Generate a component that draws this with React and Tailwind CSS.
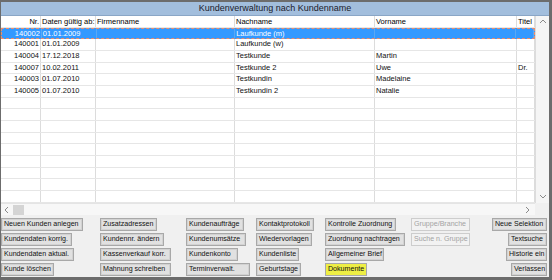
import React from "react";

const cols = [
  { label: "Nr.", w: "w-[40px]", right: true },
  { label: "Daten gültig ab:", w: "w-[55px]" },
  { label: "Firmenname", w: "w-[139px]" },
  { label: "Nachname", w: "w-[140px]" },
  { label: "Vorname", w: "w-[142px]" },
  { label: "Titel", w: "w-[18px]" },
];

const rows = [
  ["140002", "01.01.2009", "", "Laufkunde (m)", "", ""],
  ["140001", "01.01.2009", "", "Laufkunde (w)", "", ""],
  ["140004", "17.12.2018", "", "Testkunde", "Martin", ""],
  ["140007", "10.02.2011", "", "Testkunde 2", "Uwe", "Dr."],
  ["140003", "01.07.2010", "", "Testkundin", "Madelaine", ""],
  ["140005", "01.07.2010", "", "Testkundin 2", "Natalie", ""],
];

// 15 rows fill the grid, empty ones still draw lines
const allRows = [...rows, ...Array.from({ length: 9 }, () => ["", "", "", "", "", ""])];

const buttonCols = [
  {
    w: "w-[99px]",
    items: [
      ["Neuen Kunden anlegen", "w-[82px]"],
      ["Kundendaten korrig.", "w-[71px]"],
      ["Kundendaten aktual.", "w-[73px]"],
      ["Kunde löschen", "w-[53px]"],
    ],
  },
  {
    w: "w-[86px]",
    items: [
      ["Zusatzadressen", "w-[57px]"],
      ["Kundennr. ändern", "w-[64px]"],
      ["Kassenverkauf korr.", "w-[71px]"],
      ["Mahnung schreiben", "w-[71px]"],
    ],
  },
  {
    w: "w-[70px]",
    items: [
      ["Kundenaufträge", "w-[58px]"],
      ["Kundenumsätze", "w-[60px]"],
      ["Kundenkonto", "w-[52px]"],
      ["Terminverwalt.", "w-[64px]"],
    ],
  },
  {
    w: "w-[69px]",
    items: [
      ["Kontaktprotokoll", "w-[58px]"],
      ["Wiedervorlagen", "w-[56px]"],
      ["Kundenliste", "w-[43px]"],
      ["Geburtstage", "w-[45px]"],
    ],
  },
  {
    w: "w-[86px]",
    items: [
      ["Kontrolle Zuordnung", "w-[71px]"],
      ["Zuordnung nachtragen", "w-[80px]"],
      ["Allgemeiner Brief", "w-[59px]"],
      ["Dokumente", "w-[42px]", "yellow"],
    ],
  },
  {
    w: "w-[70px]",
    items: [
      ["Gruppe/Branche", "w-[59px]", "disabled"],
      ["Suche n. Gruppe", "w-[59px]", "disabled"],
    ],
  },
];

const rightButtons = [
  ["Neue Selektion", "w-[55px]"],
  ["Textsuche", "w-[39px]"],
  ["Historie ein", "w-[41px]"],
  ["Verlassen", "w-[36px]"],
];

const Btn = ({ label, w, kind }) => {
  let cls = "border-[#a8a8a8] bg-[#e1e1e1] text-[#111] shadow-[inset_0_0_0_1px_#d2d2d2]";
  if (kind === "disabled") cls = "border-[#cdcdcd] bg-[#f2f2f2] text-[#a3a3a3]";
  if (kind === "yellow") cls = "border-[#a8a8a8] bg-[#eeee44] text-[#111]";
  return (
    <div
      className={`${w} ${cls} h-[13px] border pl-[2px] text-[7.1px] leading-[11px] whitespace-nowrap overflow-hidden`}
    >
      {label}
    </div>
  );
};

const Chevron = ({ dir }) => {
  const d = {
    up: "M1 5 L4 2 L7 5",
    down: "M1 2 L4 5 L7 2",
    left: "M5 1 L2 4 L5 7",
    right: "M2 1 L5 4 L2 7",
  }[dir];
  return (
    <svg width="8" height="8" viewBox="0 0 8 8">
      <path d={d} fill="none" stroke="#8a8a8a" strokeWidth="1" />
    </svg>
  );
};

export default function App() {
  return (
    <div
      className="w-[552px] h-[280px] bg-[#f0f0f0] border-t-2 border-l border-r-[3px] border-b-[3px] border-[#6c6c6c] flex flex-col overflow-hidden"
      style={{ fontFamily: '"Liberation Sans", Arial, sans-serif' }}
    >
      <div className="h-[14px] bg-[#a2bedd] border-b border-[#8aa6c6] flex items-center justify-center text-[9px] text-[#1b1b2b]">
        Kundenverwaltung nach Kundenname
      </div>

      <div className="flex h-[187px]">
        <div className="w-[534px] bg-white flex flex-col">
          <div className="flex h-[12px] border-b border-[#e6e6e6]">
            {cols.map((c, i) => (
              <div
                key={i}
                className={`${c.w} border-r border-[#dcdcdc] px-[1px] text-[7.5px] leading-[11px] whitespace-nowrap overflow-hidden ${c.right ? "text-right" : ""}`}
              >
                {c.label}
              </div>
            ))}
          </div>
          {allRows.map((r, ri) => {
            const sel = ri === 0;
            const h = ri % 3 === 0 ? "h-[11px]" : "h-[12px]";
            return (
              <div
                key={ri}
                className={`flex ${h} ${sel ? "bg-[#3399ff] text-white border border-dashed border-[#e88c6c]" : "text-[#111] border-b border-[#e6e6e6]"}`}
              >
                {r.map((v, ci) => (
                  <div
                    key={ci}
                    className={`${cols[ci].w} ${sel ? "border-r border-[#5aa8f5]" : "border-r border-[#dcdcdc]"} px-[1px] text-[7.5px] leading-[10px] whitespace-nowrap overflow-hidden ${cols[ci].right ? "text-right" : ""}`}
                  >
                    {v}
                  </div>
                ))}
              </div>
            );
          })}
        </div>
        <div className="w-[14px] bg-[#f5f5f5] border-l border-[#dcdcdc] flex flex-col items-center justify-between py-[2px]">
          <Chevron dir="up" />
          <Chevron dir="down" />
        </div>
      </div>

      <div className="flex h-[12px]">
        <div className="w-[534px] bg-[#f7f7f7] border-t border-[#e4e4e4] flex items-center pl-[2px] pr-[3px]">
          <Chevron dir="left" />
          <div className="ml-[2px] w-[11px] h-[10px] bg-[#d4d4d4]" />
          <div className="flex-1" />
          <Chevron dir="right" />
        </div>
        <div className="w-[14px] bg-[#f0f0f0]" />
      </div>

      <div className="flex flex-1 pt-[3px] pr-[2px]">
        {buttonCols.map((c, i) => (
          <div key={i} className={`${c.w} flex flex-col gap-[2px]`}>
            {c.items.map(([label, w, kind]) => (
              <Btn key={label} label={label} w={w} kind={kind} />
            ))}
          </div>
        ))}
        <div className="flex-1 flex flex-col items-end gap-[2px]">
          {rightButtons.map(([label, w]) => (
            <Btn key={label} label={label} w={w} />
          ))}
        </div>
      </div>
    </div>
  );
}
